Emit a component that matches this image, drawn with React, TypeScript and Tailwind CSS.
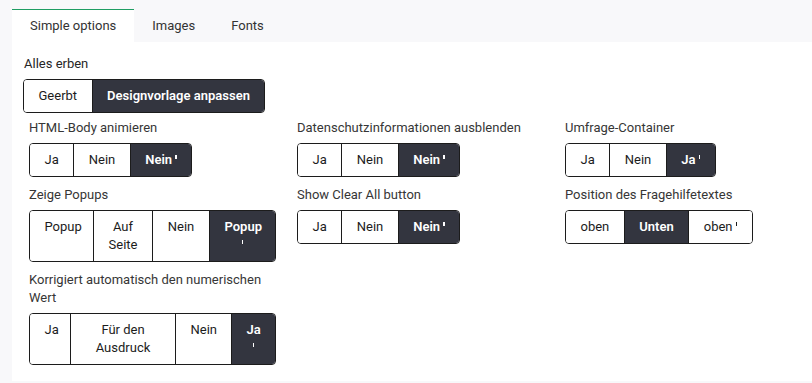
import React from "react";

type Seg = { label: string; active?: boolean; mark?: boolean; w?: string };

function Group({ segs }: { segs: Seg[] }) {
  return (
    <div className="flex w-fit rounded-[4px] border border-[#1c1c1c] overflow-hidden divide-x divide-[#1c1c1c] text-[13px] leading-[18px]">
      {segs.map((s, i) => (
        <div
          key={i}
          className={`${s.w ?? ""} shrink-0 px-[14.5px] py-[7px] text-center ${
            s.active ? "bg-[#33353f] text-white font-semibold" : "bg-white text-[#1c1c1c]"
          }`}
        >
          {s.label}
          {s.mark && (
            <>
              {" "}
              <span className="relative -top-[5px] inline-block h-[4px] w-[1.5px] bg-current" />
            </>
          )}
        </div>
      ))}
    </div>
  );
}

function Field({ label, segs }: { label: string; segs: Seg[] }) {
  return (
    <div className="flex flex-col">
      <div className="text-[13px] leading-[18px] text-[#363636] mb-[6px]">{label}</div>
      <Group segs={segs} />
    </div>
  );
}

export default function App() {
  return (
    <div
      className="min-h-[383px] bg-[#f8f8fa] pl-3 pt-[9px]"
      style={{ fontFamily: "Roboto, 'Noto Sans', sans-serif" }}
    >
      <div className="flex h-[33px] text-[13px] text-[#333]">
        <div className="flex items-center bg-white border-t border-[#1f9d63] px-[18px]">Simple options</div>
        <div className="flex items-center px-[18px]">Images</div>
        <div className="flex items-center px-[18px]">Fonts</div>
      </div>
      <div className="bg-white pl-[11px] pt-[13px] pb-[16px]">
        <div className="text-[13px] leading-[18px] text-[#262626] mb-[6px] pl-px">Alles erben</div>
        <Group segs={[{ label: "Geerbt" }, { label: "Designvorlage anpassen", active: true }]} />
        <div className="grid grid-cols-[247px_247px_247px] gap-x-[21px] gap-y-[9px] ml-[6px] mt-[6px] items-start">
          <Field
            label="HTML-Body animieren"
            segs={[{ label: "Ja" }, { label: "Nein" }, { label: "Nein", active: true, mark: true }]}
          />
          <Field
            label="Datenschutzinformationen ausblenden"
            segs={[{ label: "Ja" }, { label: "Nein" }, { label: "Nein", active: true, mark: true }]}
          />
          <Field
            label="Umfrage-Container"
            segs={[{ label: "Ja" }, { label: "Nein" }, { label: "Ja", active: true, mark: true }]}
          />
          <Field
            label="Zeige Popups"
            segs={[
              { label: "Popup", w: "w-[64px]" },
              { label: "Auf Seite", w: "w-[59px]" },
              { label: "Nein", w: "w-[57px]" },
              { label: "Popup", active: true, mark: true, w: "w-[65px]" },
            ]}
          />
          <Field
            label="Show Clear All button"
            segs={[{ label: "Ja" }, { label: "Nein" }, { label: "Nein", active: true, mark: true }]}
          />
          <Field
            label="Position des Fragehilfetextes"
            segs={[{ label: "oben" }, { label: "Unten", active: true }, { label: "oben", mark: true }]}
          />
          <Field
            label="Korrigiert automatisch den numerischen Wert"
            segs={[
              { label: "Ja", w: "w-[41px]" },
              { label: "Für den Ausdruck", w: "w-[105px]" },
              { label: "Nein", w: "w-[56px]" },
              { label: "Ja", active: true, mark: true, w: "w-[43px]" },
            ]}
          />
        </div>
      </div>
    </div>
  );
}
